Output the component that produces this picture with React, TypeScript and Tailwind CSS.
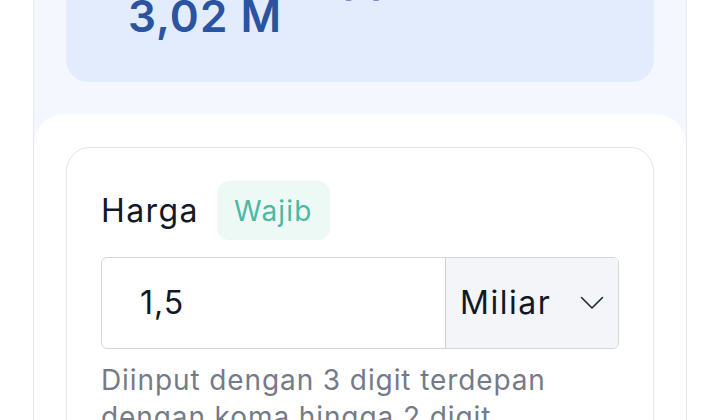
import React from "react";

const ChevronDown = () => (
    <svg width="24" height="14" viewBox="0 0 24 14" fill="none" className="text-[#1f2937]">
        <path d="M1.5 1.5 L12 12 L22.5 1.5" stroke="currentColor" strokeWidth="1.6" strokeLinecap="round" strokeLinejoin="round" />
    </svg>
);

const App = () => {
    return (
        <div className="h-[420px] overflow-hidden bg-white font-['Inter',sans-serif]">
            <div className="mx-[33px] flex h-full flex-col border-x border-[#e7e9ef] bg-[#f5f7fe]">
                {/* estimasi card */}
                <div className="mx-[32px] -mt-[40px] rounded-b-[22px] bg-[#e2ecfd] pb-[42px] pl-[62px] text-[#2a53a0]">
                    <div className="text-[44px] leading-[32px] font-semibold">Estimasi appraisal</div>
                    <div className="text-[44px] leading-[48px] font-semibold tracking-[1px]">3,02 M</div>
                </div>

                {/* form section */}
                <div className="mt-[32px] flex-1 rounded-t-[30px] bg-white px-[32px] pt-[33px]">
                    <div className="rounded-[24px] border border-[#e4e4e7] px-[34px] pt-[33px]">
                        <div className="flex items-center gap-[18px]">
                            <span className="text-[32px] tracking-[1.4px] text-[#111827]">Harga</span>
                            <span className="flex h-[59px] w-[113px] items-center justify-center rounded-[12px] bg-[#edf9f5] text-[28px] tracking-[1.2px] text-[#4cb8a2]">
                                Wajib
                            </span>
                        </div>

                        <div className="mt-[17px] flex h-[92px] overflow-hidden rounded-[6px] border border-[#d4d6db]">
                            <div className="flex flex-1 items-center pl-[38px] text-[32px] tracking-[1px] text-[#111827]">1,5</div>
                            <div className="flex w-[173px] items-center justify-between border-l border-[#cfd2d8] bg-[#f4f5f8] pl-[14px] pr-[14px]">
                                <span className="text-[32px] tracking-[1.5px] text-[#111827]">Miliar</span>
                                <ChevronDown />
                            </div>
                        </div>

                        <p className="mt-[13px] text-[28px] leading-[37px] tracking-[0.9px] text-[#747b86]">
                            Diinput dengan 3 digit terdepan dengan koma hingga 2 digit
                            <br />
                            di belakang koma
                        </p>
                    </div>
                </div>
            </div>
        </div>
    );
};

export default App;
